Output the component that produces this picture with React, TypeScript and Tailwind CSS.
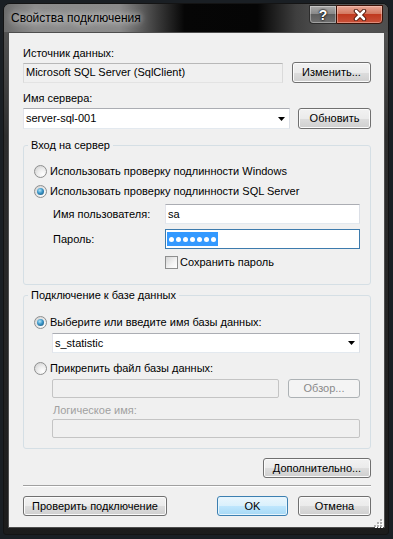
import type { ReactNode } from "react";

type BtnProps = {
  children: ReactNode;
  className?: string;
  primary?: boolean;
  disabled?: boolean;
};

function Button({ children, className = "", primary = false, disabled = false }: BtnProps) {
  const look = disabled
    ? "border-[#adb2b5] bg-[#f4f4f4] text-[#8a8a8a]"
    : primary
      ? "border-[#3c7fb1] bg-[linear-gradient(#eaf6fd_0%,#d9f0fc_50%,#bee6fd_51%,#a7d9f5_100%)] shadow-[inset_0_0_0_1px_#e6f5fd] text-black"
      : "border-[#707070] bg-[linear-gradient(#f2f2f2_0%,#ebebeb_50%,#dddddd_51%,#cfcfcf_100%)] shadow-[inset_0_0_0_1px_#fbfbfb] text-black";
  return (
    <button
      type="button"
      className={`flex shrink-0 items-center justify-center rounded-[3px] border text-[11px] leading-none ${look} ${className}`}
    >
      {children}
    </button>
  );
}

function Arrow() {
  return (
    <svg width="7" height="4" viewBox="0 0 7 4" className="shrink-0">
      <path d="M0 0h7L3.5 4z" fill="#000" />
    </svg>
  );
}

function Radio({ checked = false }: { checked?: boolean }) {
  return (
    <span className="flex h-[13px] w-[13px] shrink-0 items-center justify-center rounded-full border border-[#8e8f8f] bg-[radial-gradient(circle_at_70%_75%,#ffffff,#ececec_45%,#cbcbcb)]">
      {checked && (
        <span className="h-[7px] w-[7px] rounded-full bg-[radial-gradient(circle_at_40%_35%,#b4e6f8,#3a95c8_45%,#1b4c6c)]" />
      )}
    </span>
  );
}

function RadioRow({ checked, label }: { checked?: boolean; label: string }) {
  return (
    <div className="flex h-[15px] items-center gap-[3px]">
      <Radio checked={checked} />
      <span className="text-[11px] leading-[13px] text-black">{label}</span>
    </div>
  );
}

const textBox = "border border-[#abadb3] border-b-[#e3e9ef] border-l-[#e2e3ea] border-r-[#dbdfe6] bg-white";
const disabledBox = "rounded-[2px] border border-[#c4c4c4] bg-[#f0f0f0]";

export default function App() {
  return (
    <div className="h-[539px] w-[393px] overflow-hidden bg-[#1a1f24] pl-[3px] pt-[3px] font-['Liberation_Sans',Arial,sans-serif]">
      <div className="flex h-[532px] w-[386px] flex-col overflow-hidden rounded-t-[7px] rounded-b-[3px] border border-[#141414] bg-[linear-gradient(#5c5c5c,#2e2e2e_25%,#1c1c1c)]">
        {/* Title bar */}
        <div className="flex h-[28px] shrink-0 items-start justify-between bg-[linear-gradient(90deg,#6a6a6a_0%,#8c8c8c_8%,#8a8a8a_30%,#3a3a3a_40%,#060606_47%,#050505_66%,#3e3e3e_76%,#575757_85%,#4e4e4e_100%)]">
          <div className="pl-[7px] pt-[7px] text-[12px] leading-[15px] text-black [text-shadow:0_0_6px_rgba(255,255,255,0.8),0_0_12px_rgba(255,255,255,0.5)]">
            Свойства подключения
          </div>
          <div className="mr-[5px] mt-[1px] flex h-[19px]">
            <div className="flex w-[27px] items-center justify-center rounded-bl-[4px] border border-r-0 border-[#2c2c2c] bg-[linear-gradient(#a8a8a8_0%,#8a8a8a_45%,#5e5e5e_50%,#707070_100%)] shadow-[inset_0_0_0_1px_rgba(255,255,255,0.35)]">
              <span className="text-[14px] font-bold leading-none text-white [text-shadow:0_0_2px_#000,0_0_2px_#000]">?</span>
            </div>
            <div className="flex w-[47px] items-center justify-center rounded-br-[4px] border border-[#3a1208] bg-[linear-gradient(#e8a796_0%,#d47a62_45%,#c0391f_50%,#c9523a_100%)] shadow-[inset_0_0_0_1px_rgba(255,210,200,0.45)]">
              <svg width="14" height="12" viewBox="0 0 14 12">
                <path d="M3 2l8 8M11 2l-8 8" stroke="#4a1408" strokeWidth="4.5" strokeLinecap="round" />
                <path d="M3 2l8 8M11 2l-8 8" stroke="#fff" strokeWidth="2.6" strokeLinecap="round" />
              </svg>
            </div>
          </div>
        </div>

        {/* Client area */}
        <div className="ml-[4px] mr-[3px] flex h-[496px] shrink-0 flex-col border border-[#4e4e4e] bg-[#f0f0f0] pl-[14px] pr-[13px] pt-[14px] text-[11px] text-black">
          <div className="h-[13px] leading-[13px]">Источник данных:</div>
          <div className="mt-[2px] flex h-[21px] items-center gap-[9px]">
            <div className="flex h-[20px] flex-1 items-center border border-[#b8b8b8] border-b-[#e3e3e3] border-l-[#dadada] border-r-[#dadada] bg-[#f0f0f0] pl-[2px] leading-none">
              Microsoft SQL Server (SqlClient)
            </div>
            <Button className="h-[21px] w-[79px]">Изменить...</Button>
          </div>

          <div className="mt-[9px] h-[13px] leading-[13px]">Имя сервера:</div>
          <div className="mt-[3px] flex h-[21px] items-center gap-[8px]">
            <div className={`flex h-[21px] flex-1 items-center justify-between pl-[2px] pr-[4px] leading-none ${textBox}`}>
              <span>server-sql-001</span>
              <Arrow />
            </div>
            <Button className="h-[21px] w-[73px]">Обновить</Button>
          </div>

          <fieldset className="mt-[10px] rounded-[3px] border border-[#d5dfe5]">
            <legend className="ml-[4px] px-[3px] text-[11px] leading-[13px]">Вход на сервер</legend>
            <div className="flex flex-col pb-[14px] pl-[10px] pr-[10px] pt-[12px]">
              <RadioRow label="Использовать проверку подлинности Windows" />
              <div className="mt-[5px]">
                <RadioRow checked label="Использовать проверку подлинности SQL Server" />
              </div>
              <div className="ml-[19px] mt-[5px] flex h-[20px] items-center">
                <span className="w-[112px] shrink-0 leading-[13px]">Имя пользователя:</span>
                <div className={`flex h-[20px] flex-1 items-center pl-[2px] leading-none ${textBox}`}>sa</div>
              </div>
              <div className="ml-[19px] mt-[5px] flex h-[20px] items-center">
                <span className="w-[112px] shrink-0 leading-[13px]">Пароль:</span>
                <div className="flex h-[20px] flex-1 items-center border border-[#3d7bad] bg-white pl-[1px]">
                  <div className="flex h-[14px] items-center gap-[2px] bg-[#3399ff] px-[2px]">
                    {[0, 1, 2, 3, 4, 5, 6].map((i) => (
                      <span key={i} className="h-[5px] w-[5px] rounded-full bg-white" />
                    ))}
                  </div>
                </div>
              </div>
              <div className="ml-[131px] mt-[6px] flex h-[15px] items-center gap-[2px]">
                <span className="h-[13px] w-[13px] shrink-0 border border-[#8e8f8f] bg-[linear-gradient(135deg,#d6d6d6,#f4f4f4_60%,#ffffff)]" />
                <span className="leading-[13px]">Сохранить пароль</span>
              </div>
            </div>
          </fieldset>

          <fieldset className="mt-[4px] rounded-[3px] border border-[#d5dfe5]">
            <legend className="ml-[4px] px-[3px] text-[11px] leading-[13px]">Подключение к базе данных</legend>
            <div className="flex flex-col pb-[10px] pl-[10px] pr-[10px] pt-[13px]">
              <RadioRow checked label="Выберите или введите имя базы данных:" />
              <div className={`ml-[18px] mt-[3px] flex h-[20px] items-center justify-between pl-[2px] pr-[4px] leading-none ${textBox}`}>
                <span>s_statistic</span>
                <Arrow />
              </div>
              <div className="mt-[8px]">
                <RadioRow label="Прикрепить файл базы данных:" />
              </div>
              <div className="ml-[18px] mt-[3px] flex h-[19px] items-center gap-[9px]">
                <div className={`h-[19px] flex-1 ${disabledBox}`} />
                <Button disabled className="h-[19px] w-[72px]">
                  Обзор...
                </Button>
              </div>
              <div className="ml-[19px] mt-[6px] h-[13px] leading-[13px] text-[#a0a0a0]">Логическое имя:</div>
              <div className={`ml-[18px] mt-[2px] h-[19px] ${disabledBox}`} />
            </div>
          </fieldset>

          <div className="mt-[9px] flex justify-end">
            <Button className="h-[20px] w-[108px]">Дополнительно...</Button>
          </div>

          <div className="mt-[7px] h-[2px] border-b border-t border-b-white border-t-[#a0a0a0]" />

          <div className="mt-[9px] flex h-[20px] items-center">
            <Button className="h-[20px] w-[144px]">Проверить подключение</Button>
            <div className="ml-auto flex gap-[10px]">
              <Button primary className="h-[20px] w-[71px]">
                OK
              </Button>
              <Button className="h-[20px] w-[73px]">Отмена</Button>
            </div>
          </div>

          <div className="-mr-[12px] mt-[3px] flex justify-end">
            <svg width="9" height="9" viewBox="0 0 9 9">
              {[
                [6, 0],
                [3, 3],
                [6, 3],
                [0, 6],
                [3, 6],
                [6, 6],
              ].map(([x, y]) => (
                <g key={`${x}-${y}`}>
                  <rect x={x + 1} y={y + 1} width="2" height="2" fill="#ffffff" />
                  <rect x={x} y={y} width="2" height="2" fill="#b0b0b0" />
                </g>
              ))}
            </svg>
          </div>
        </div>
      </div>
    </div>
  );
}
